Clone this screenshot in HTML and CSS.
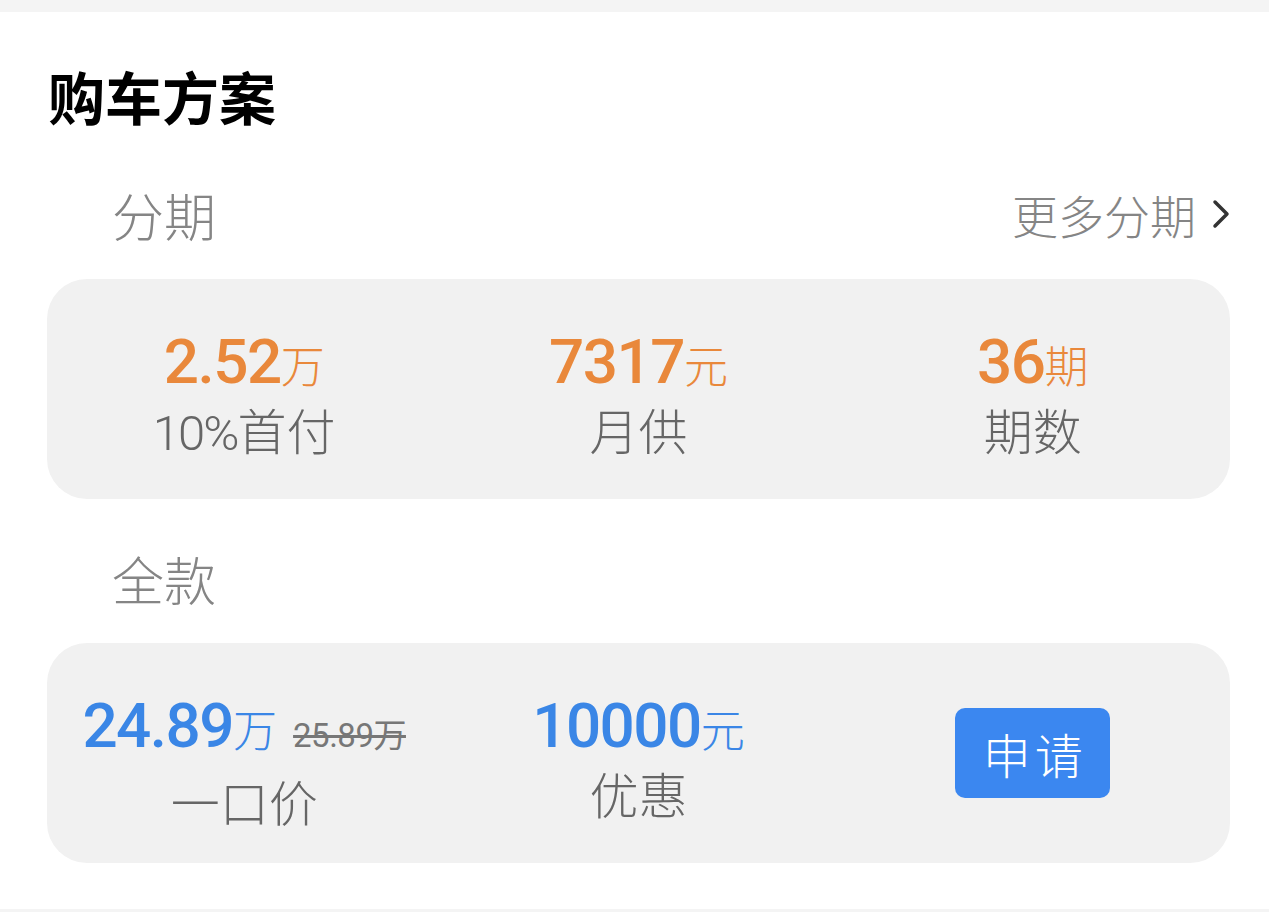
FILE: index.html
```html
<!DOCTYPE html>
<html lang="zh-CN">
<head>
<meta charset="UTF-8" />
<meta name="viewport" content="width=device-width, initial-scale=1" />
<title>购车方案</title>
<link rel="stylesheet" href="styles.css">
</head>
<body>

<div class="top-band"></div>

<section class="plan">
  <h1 class="plan-title">购车方案</h1>

  <div class="section-head">
    <span class="section-name">分期</span>
    <a class="more-link" href="#">更多分期
      <svg class="chevron" viewBox="0 0 18 30" width="18" height="30">
        <path d="M3 3 L15 15 L3 27" fill="none" stroke="#333" stroke-width="3.5" stroke-linecap="round" stroke-linejoin="round"/>
      </svg>
    </a>
  </div>

  <div class="card">
    <div class="cell">
      <div class="value orange">2.52<span class="unit">万</span></div>
      <div class="label"><span class="num">10%</span>首付</div>
    </div>
    <div class="cell">
      <div class="value orange">7317<span class="unit">元</span></div>
      <div class="label">月供</div>
    </div>
    <div class="cell">
      <div class="value orange">36<span class="unit">期</span></div>
      <div class="label">期数</div>
    </div>
  </div>

  <div class="section-head">
    <span class="section-name">全款</span>
  </div>

  <div class="card">
    <div class="cell">
      <div class="value blue">24.89<span class="unit">万</span><s class="old-price">25.89万</s></div>
      <div class="label">一口价</div>
    </div>
    <div class="cell">
      <div class="value blue">10000<span class="unit">元</span></div>
      <div class="label">优惠</div>
    </div>
    <div class="cell cell-action">
      <button class="apply-btn" type="button">申请</button>
    </div>
  </div>
</section>

<div class="bottom-line"></div>

</body>
</html>
```

FILE: styles.css
```css
body {
  margin: 0;
  background: #fff;
  font-family: "Noto Sans CJK SC", "Noto Sans", sans-serif;
  color: #222;
}
.top-band {
  height: 12px;
  background: #f4f4f4;
}
.plan {
  padding: 0 39px 0 47px;
  height: 897px;
  box-sizing: border-box;
}
.plan-title {
  margin: 0;
  padding: 43px 0 0 1px;
  font-size: 57px;
  line-height: 80px;
  font-weight: 700;
  color: #000;
}
.section-head {
  display: flex;
  justify-content: space-between;
  align-items: center;
  height: 120px;
  box-sizing: border-box;
  padding: 0 0 10px 65px;
}
.plan-title + .section-head {
  margin-top: 24px;
}
.section-name {
  font-size: 52px;
  font-weight: 300;
  color: #858585;
}
.more-link {
  display: flex;
  align-items: center;
  gap: 16px;
  font-size: 46px;
  font-weight: 300;
  color: #858585;
  text-decoration: none;
}
.chevron {
  display: block;
}
.card {
  display: grid;
  grid-template-columns: repeat(3, 1fr);
  height: 220px;
  border-radius: 40px;
  background: #f1f1f1;
  margin-bottom: 24px;
}
.cell {
  display: flex;
  flex-direction: column;
  align-items: center;
  padding-top: 49px;
}
.cell-action {
  justify-content: center;
  padding-top: 0;
}
.value {
  font-family: Roboto, "Noto Sans CJK SC", sans-serif;
  font-size: 62px;
  font-weight: 500;
  line-height: 68px;
  letter-spacing: -1.5px;
  white-space: nowrap;
}
.unit {
  font-family: "Noto Sans CJK SC", sans-serif;
  font-size: 44px;
  font-weight: 300;
  letter-spacing: 0;
}
.orange {
  color: #e9883b;
}
.blue {
  color: #3a86e6;
}
.old-price {
  margin-left: 16px;
  font-family: Roboto, "Noto Sans CJK SC", sans-serif;
  font-size: 33px;
  font-weight: 400;
  letter-spacing: -0.5px;
  color: #777;
}
.label {
  font-size: 49px;
  font-weight: 300;
  line-height: 62px;
  color: #666;
}
.label .num {
  font-family: Roboto, sans-serif;
  letter-spacing: -2px;
}
.apply-btn {
  width: 155px;
  height: 90px;
  border: none;
  border-radius: 10px;
  background: #3b87f0;
  color: #fff;
  font-family: "Noto Sans CJK SC", sans-serif;
  font-size: 48px;
  font-weight: 300;
  letter-spacing: 4px;
  padding: 0 0 0 4px;
}
.bottom-line {
  height: 3px;
  background: #f4f4f4;
}
```
